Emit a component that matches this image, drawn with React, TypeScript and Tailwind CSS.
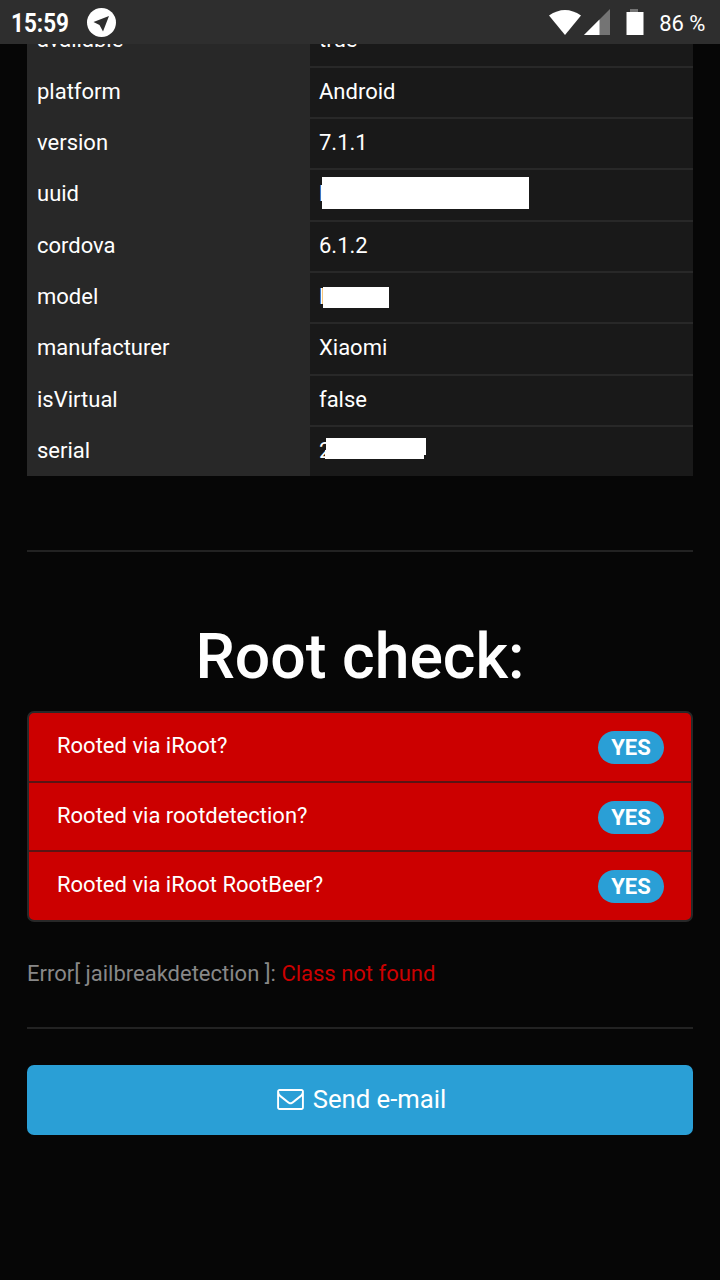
import type { ReactNode } from "react";

const cover = "absolute bg-white";

const device: { name: string; value: ReactNode }[] = [
  { name: "available", value: "true" },
  { name: "platform", value: "Android" },
  { name: "version", value: "7.1.1" },
  {
    name: "uuid",
    value: (
      <span className="relative">
        l<span className={`${cover} left-[3px] top-[-4px] h-[32px] w-[207px]`} />
      </span>
    ),
  },
  { name: "cordova", value: "6.1.2" },
  {
    name: "model",
    value: (
      <span className="relative">
        l<span className={`${cover} left-[4px] top-[3px] h-[21px] w-[66px]`} />
      </span>
    ),
  },
  { name: "manufacturer", value: "Xiaomi" },
  { name: "isVirtual", value: "false" },
  {
    name: "serial",
    value: (
      <span className="relative">
        2<span className={`${cover} left-[7px] top-0 h-[17px] w-[100px]`} />
        <span className={`${cover} left-[6px] top-[12px] h-[9px] w-[99px]`} />
      </span>
    ),
  },
];

const checks = ["Rooted via iRoot?", "Rooted via rootdetection?", "Rooted via iRoot RootBeer?"];

function StatusBar() {
  return (
    <header className="flex h-[44px] shrink-0 items-center bg-[#2e2e2e] pl-[11px] pr-[14.500px] text-white">
      <span className="w-[76px] whitespace-nowrap pt-[2px]">
        <span className="inline-block origin-left scale-x-[0.865] text-[26px] font-bold leading-[42px]">15:59</span>
      </span>
      <svg width="29" height="29" viewBox="0 0 29 29">
        <circle cx="14.5" cy="14.5" r="14.5" fill="#fff" />
        <path d="M22 8 6.500 14l6 3L16 23.500Z" fill="#2e2e2e" />
      </svg>
      <div className="ml-auto flex items-center">
        <svg width="96" height="27" viewBox="0 0 96 27">
          <path d="M1 6.500Q17 -4.500 33 6.500L17 26Z" fill="#fff" />
          <path d="M62 0V26H36Z" fill="#747474" />
          <path d="M51.500 10.500V26H36Z" fill="#fff" />
          <path d="M82 0h8v3h-8Z" fill="#747474" />
          <path d="M78.500 3h17v23h-17Z" fill="#fff" />
        </svg>
        <span className="ml-[15px] whitespace-nowrap pt-[3px] text-[22px] leading-[40px]">86 %</span>
      </div>
    </header>
  );
}

export default function App() {
  return (
    <div className="flex h-[1280px] w-[720px] flex-col overflow-hidden bg-[#060606] font-['Roboto',sans-serif] text-[22px] text-white">
      <StatusBar />
      <main className="flex min-h-0 flex-1 flex-col overflow-hidden px-[27px]">
        <div className="mt-[-29.600px] flex shrink-0 flex-col">
          {device.map((row) => (
            <div key={row.name} className="flex h-[51.340px] bg-[#191919] leading-[26px]">
              <div className="w-[283px] bg-[#282828] pl-[10px] pt-[13px]">{row.name}</div>
              <div className="flex-1 border-t-2 border-[#282828] pl-[9px] pt-[11px]">{row.value}</div>
            </div>
          ))}
        </div>
        <hr className="mt-[73.500px] border-0 border-t-2 border-[#222]" />
        <h1 className="mt-[70px] text-center text-[62.500px] font-medium leading-[70px]">Root check:</h1>
        <ul className="mt-[19px] shrink-0 overflow-hidden rounded-[7px] border-2 border-[#282828] bg-[#cc0000]">
          {checks.map((label) => (
            <li
              key={label}
              className="flex h-[69.670px] justify-between border-t-2 border-[#5a1414] pl-[28px] pr-[27px] first:h-[67.670px] first:border-t-0"
            >
              <span className="pt-[19px] leading-[28px]">{label}</span>
              <span className="mt-[18px] flex h-[33px] w-[66px] items-center justify-center rounded-full bg-[#2a9fd6] font-bold">
                YES
              </span>
            </li>
          ))}
        </ul>
        <p className="mt-[37px] leading-[30px] text-[#888]">
          Error[ jailbreakdetection ]: <span className="text-[#cc0000]">Class not found</span>
        </p>
        <hr className="mt-[38px] border-0 border-t-2 border-[#222]" />
        <button className="mt-[36px] flex h-[70px] shrink-0 items-center justify-center rounded-[7px] bg-[#2a9fd6] pb-[2px] pl-[3px] text-[25.700px]">
          <svg className="mr-[9px] mt-px" width="27" height="21" viewBox="0 256 1792 1408" fill="currentColor">
            <path d="M1664 1504v-768q-32 36-69 66-268 206-426 338-51 43-83 67t-86.500 48.500-102.500 24.500h-2q-48 0-102.500-24.500t-86.500-48.500-83-67q-158-132-426-338-37-30-69-66v768q0 13 9.500 22.500t22.500 9.500h1472q13 0 22.500-9.500t9.500-22.500zm0-1051v-24.500l-.5-13-3-12.500-5.500-9-9-7.500-14-2.500h-1472q-13 0-22.500 9.500t-9.500 22.500q0 168 147 284 193 152 401 317 6 5 35 29.500t46 37.500 44.500 31.500 50.500 27.500 43 9h2q20 0 43-9t50.500-27.500 44.500-31.500 46-37.500 35-29.500q208-165 401-317 54-43 100.500-115.500t46.500-131.500zm128-37v1088q0 66-47 113t-113 47h-1472q-66 0-113-47t-47-113v-1088q0-66 47-113t113-47h1472q66 0 113 47t47 113z" />
          </svg>
          Send e-mail
        </button>
      </main>
    </div>
  );
}
